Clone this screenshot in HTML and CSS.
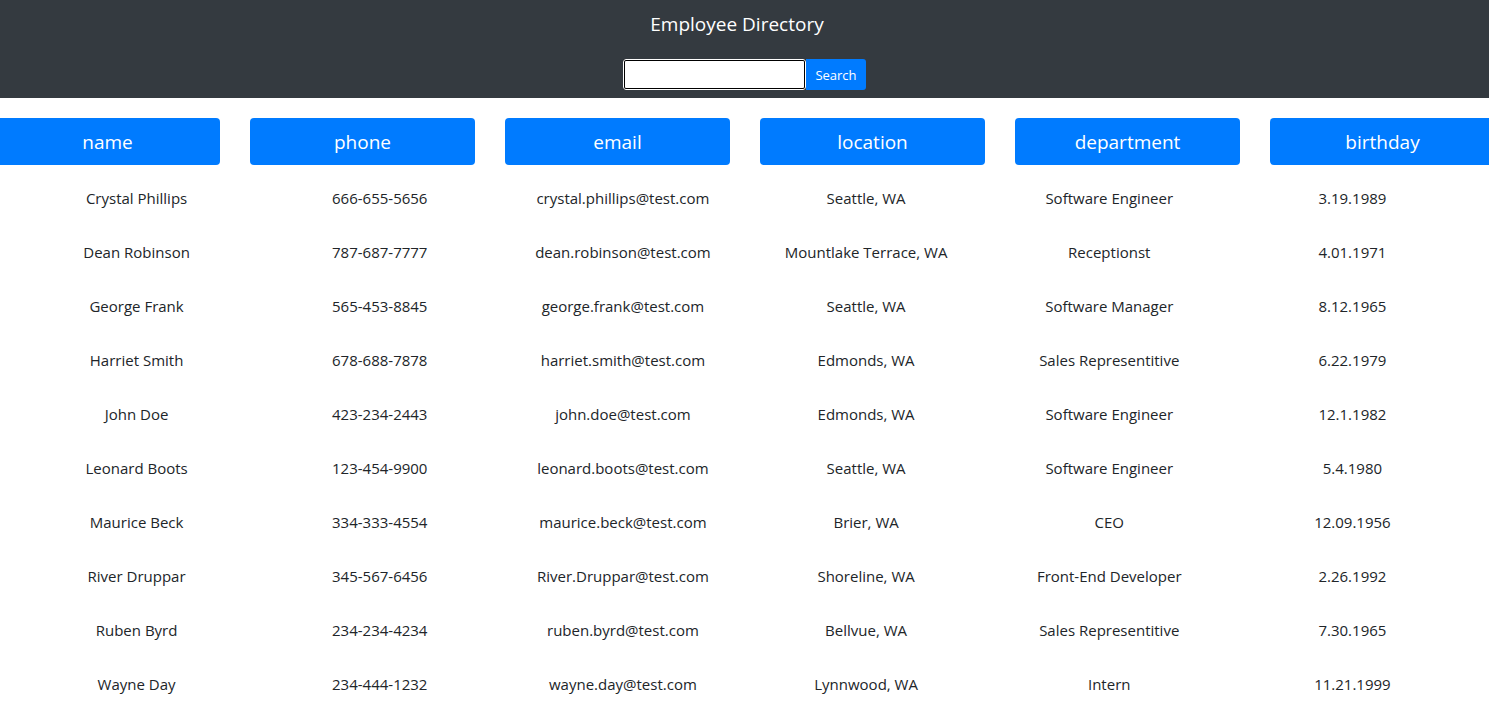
FILE: index.html
```html
<!DOCTYPE html>
<html lang="en">
<head>
<meta charset="utf-8">
<title>Employee Directory</title>
<link rel="stylesheet" href="styles.css">
</head>
<body>
<header class="topbar">
  <h1 class="title">Employee Directory</h1>
  <form class="search">
    <input class="search-input" type="text" aria-label="Search">
    <button class="search-btn" type="button">Search</button>
  </form>
</header>
<main class="directory">
  <div class="heads">
    <button class="head" type="button">name</button>
    <button class="head" type="button">phone</button>
    <button class="head" type="button">email</button>
    <button class="head" type="button">location</button>
    <button class="head" type="button">department</button>
    <button class="head" type="button">birthday</button>
  </div>
  <div class="rows">
    <div class="row"><span>Crystal Phillips</span><span>666-655-5656</span><span>crystal.phillips@test.com</span><span>Seattle, WA</span><span>Software Engineer</span><span>3.19.1989</span></div>
    <div class="row"><span>Dean Robinson</span><span>787-687-7777</span><span>dean.robinson@test.com</span><span>Mountlake Terrace, WA</span><span>Receptionst</span><span>4.01.1971</span></div>
    <div class="row"><span>George Frank</span><span>565-453-8845</span><span>george.frank@test.com</span><span>Seattle, WA</span><span>Software Manager</span><span>8.12.1965</span></div>
    <div class="row"><span>Harriet Smith</span><span>678-688-7878</span><span>harriet.smith@test.com</span><span>Edmonds, WA</span><span>Sales Representitive</span><span>6.22.1979</span></div>
    <div class="row"><span>John Doe</span><span>423-234-2443</span><span>john.doe@test.com</span><span>Edmonds, WA</span><span>Software Engineer</span><span>12.1.1982</span></div>
    <div class="row"><span>Leonard Boots</span><span>123-454-9900</span><span>leonard.boots@test.com</span><span>Seattle, WA</span><span>Software Engineer</span><span>5.4.1980</span></div>
    <div class="row"><span>Maurice Beck</span><span>334-333-4554</span><span>maurice.beck@test.com</span><span>Brier, WA</span><span>CEO</span><span>12.09.1956</span></div>
    <div class="row"><span>River Druppar</span><span>345-567-6456</span><span>River.Druppar@test.com</span><span>Shoreline, WA</span><span>Front-End Developer</span><span>2.26.1992</span></div>
    <div class="row"><span>Ruben Byrd</span><span>234-234-4234</span><span>ruben.byrd@test.com</span><span>Bellvue, WA</span><span>Sales Representitive</span><span>7.30.1965</span></div>
    <div class="row"><span>Wayne Day</span><span>234-444-1232</span><span>wayne.day@test.com</span><span>Lynnwood, WA</span><span>Intern</span><span>11.21.1999</span></div>
  </div>
</main>
</body>
</html>
```

FILE: styles.css
```css
html, body {
  margin: 0;
  padding: 0;
  overflow: hidden;
}
body {
  font-family: "Open Sans", "Noto Sans", sans-serif;
  font-size: 15px;
  color: #212529;
  background: #fff;
}
.topbar {
  background: #343a40;
  height: 98px;
  box-sizing: border-box;
  padding-top: 10px;
  display: flex;
  flex-direction: column;
  align-items: center;
}
.title {
  margin: 0;
  padding-right: 15px;
  font-size: 19px;
  font-weight: 400;
  line-height: 28px;
  color: #fff;
}
.search {
  margin-top: 21px;
  display: flex;
}
.search-input {
  width: 183px;
  height: 31px;
  box-sizing: border-box;
  border: 2px solid #000;
  outline: 1px solid #fff;
  outline-offset: -1px;
  border-radius: 3px;
  background: #fff;
  margin: 0;
  padding: 0 4px;
}
.search-btn {
  width: 60px;
  height: 31px;
  border: 0;
  margin: 0;
  background: #007bff;
  color: #fff;
  font-family: inherit;
  font-size: 13px;
  border-radius: 0 3px 3px 0;
  padding: 0;
}
.directory {
  padding-top: 20px;
}
.heads {
  display: flex;
  gap: 30px;
  margin-left: -5px;
  width: 1500px;
}
.head {
  flex: 0 0 225px;
  height: 47px;
  border: 0;
  border-radius: 4px;
  background: #007bff;
  color: #fff;
  font-family: inherit;
  font-size: 19px;
  padding: 0 0 0 0;
  line-height: 49px;
}
.rows {
  padding: 6px 15px 0;
}
.row {
  display: grid;
  grid-template-columns: repeat(6, 1fr);
  height: 54px;
  align-items: center;
  text-align: center;
}
```
